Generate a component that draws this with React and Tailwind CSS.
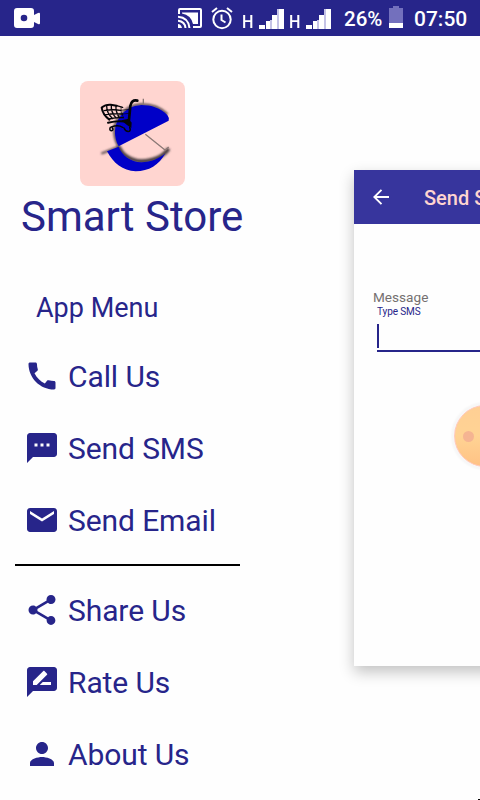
const PATHS = {
  call: 'M20.01 15.38c-1.23 0-2.42-.2-3.53-.56-.35-.12-.74-.03-1.01.24l-1.57 1.97c-2.83-1.35-5.48-3.9-6.89-6.83l1.95-1.66c.27-.28.35-.67.24-1.02-.37-1.11-.56-2.3-.56-3.53 0-.54-.45-.99-.99-.99H4.19C3.65 3 3 3.24 3 3.99 3 13.28 10.73 21 20.01 21c.71 0 .99-.63.99-1.18v-3.45c0-.54-.45-.99-.99-.99z',
  sms: 'M20 2H4c-1.1 0-1.99.9-1.99 2L2 22l4-4h14c1.1 0 2-.9 2-2V4c0-1.100-.9-2-2-2zM9 11H7V9h2v2zm4 0h-2V9h2v2zm4 0h-2V9h2v2z',
  email: 'M20 4H4c-1.100 0-1.990.9-1.990 2L2 18c0 1.100.9 2 2 2h16c1.100 0 2-.9 2-2V6c0-1.100-.9-2-2-2zm0 4l-8 5-8-5V6l8 5 8-5v2z',
  share: 'M18 16.080c-.76 0-1.440.3-1.960.77L8.910 12.700c.05-.23.09-.46.09-.7s-.04-.47-.09-.7l7.050-4.110c.54.5 1.250.81 2.040.81 1.660 0 3-1.340 3-3s-1.340-3-3-3-3 1.340-3 3c0 .24.04.47.09.7L8.040 9.810C7.500 9.310 6.790 9 6 9c-1.660 0-3 1.340-3 3s1.340 3 3 3c.79 0 1.500-.31 2.040-.81l7.120 4.160c-.05.21-.08.43-.08.65 0 1.610 1.310 2.920 2.920 2.920s2.920-1.310 2.920-2.920-1.310-2.920-2.920-2.920z',
  rate: 'M20 2H4c-1.100 0-1.990.9-1.990 2L2 22l4-4h14c1.100 0 2-.9 2-2V4c0-1.100-.9-2-2-2zM6 14v-2.470l6.880-6.880c.2-.2.51-.2.71 0l1.770 1.770c.2.2.2.51 0 .71L8.470 14H6zm12 0h-7.500l2-2H18v2z',
  person: 'M12 12c2.210 0 4-1.790 4-4s-1.790-4-4-4-4 1.790-4 4 1.790 4 4 4zm0 2c-2.670 0-8 1.340-8 4v2h16v-2c0-2.660-5.330-4-8-4z',
};

function MenuItem({ icon, label }) {
  return (
    <li className="flex h-[72px] items-center pl-6">
      <svg viewBox="0 0 24 24" className="size-9 shrink-0 fill-current">
        <path d={PATHS[icon]} />
      </svg>
      <span className="mt-0.5 ml-2 text-[30px] leading-9 tracking-[-0.1px] whitespace-nowrap">{label}</span>
    </li>
  );
}

function Signal() {
  return (
    <svg width="26" height="20" viewBox="0 0 26 20" className="shrink-0">
      <path fill="#fff" d="M0 16h6v4H0zM7 12h4v8H7zM13 6h5v14h-5zM20 0h5v20h-5z" />
      <path fill="#c5c3e6" d="M11 11h2v9h-2zM18 0h2v20h-2z" />
    </svg>
  );
}

function StatusBar() {
  return (
    <header className="flex h-9 items-start bg-[#27258a] text-white">
      <svg width="26" height="20" viewBox="0 0 26 20" className="mt-2 ml-3.5 shrink-0" fill="#fff">
        <path
          fillRule="evenodd"
          d="M3 0h14q3 0 3 3v4l4-2q2-1 2 1v9q0 2-2 1l-4-2v3q0 3-3 3H3q-3 0-3-3V3q0-3 3-3zM10 6.700a3.300 3.300 0 1 0 0 6.600 3.300 3.300 0 1 0 0-6.600z"
        />
      </svg>
      <svg width="24" height="20" viewBox="0 0 24 20" className="mt-2 ml-[138px] shrink-0" fill="none" stroke="#fff" strokeWidth="2">
        <path d="M1 6V2q0-1 1-1h20q1 0 1 1v16q0 1-1 1h-7" />
        <path fill="#fff" stroke="none" d="M4 4.500h16V16h-5Q13 7 4 5.500z" />
        <path d="M0 8.700Q10.500 9.500 11.500 20M0 12.700Q7 13.500 7.500 20" />
        <path fill="#fff" stroke="none" d="M0 16q3 0 4 4H0z" />
      </svg>
      <svg width="22" height="23" viewBox="0 0 22 23" className="mt-[7px] ml-[9px] shrink-0" fill="none" stroke="#fff" strokeWidth="2">
        <circle cx="11" cy="12.500" r="8.700" />
        <path d="M1 5l5-4M21 5l-5-4M10.500 7.500V13l4 2.500" />
      </svg>
      <span className="mt-[12px] ml-[9px] w-[17px] text-[19px] leading-5 font-medium tracking-tighter"><span className="inline-block origin-left scale-x-85">H</span></span>
      <div className="mt-[9px]"><Signal /></div>
      <span className="mt-[12px] ml-[4px] w-[17px] text-[19px] leading-5 font-medium"><span className="inline-block origin-left scale-x-85">H</span></span>
      <div className="mt-[9px]"><Signal /></div>
      <span className="mt-[7px] ml-[12px] w-[45px] text-[20.5px] leading-6 font-medium whitespace-nowrap">26%</span>
      <svg width="14" height="22" viewBox="0 0 14 22" className="mt-1.5 shrink-0">
        <path fill="#7370bd" d="M4 0h6v2h4v15H0V2h4z" />
        <path fill="#fff" d="M0 17h14v5H0z" />
      </svg>
      <span className="mt-[7px] ml-[11px] text-[21px] leading-6 font-medium whitespace-nowrap">07:50</span>
    </header>
  );
}

function Logo() {
  return (
    <svg viewBox="30 33 315 315" className="ml-20 block size-[105px] rounded-[8px] bg-[#ffd5d0]">
      <defs>
        <filter id="soft" x="-20%" y="-20%" width="140%" height="140%">
          <feGaussianBlur stdDeviation="3" />
        </filter>
      </defs>
      <g fill="none" stroke="#4b4043" filter="url(#soft)">
        <path strokeWidth="7" d="M145 228C128 196 130 160 150 138C168 114 190 104 214 103Q262 103 292 133" />
        <path strokeWidth="12" d="M146 229C155 253 180 273 214 274C248 273 280 260 296 236" />
        <path strokeWidth="6" d="M94 251L146 230" />
      </g>
      <path fill="#0000c8" d="M146 229L296 152Q298 142 292 135C272 114 245 105 214 105C186 107 166 118 150 140C130 165 131 202 146 229z" />
      <path fill="#0000c8" d="M111 244L146 230C156 256 182 276 214 277C242 276 268 266 286 250C268 285 236 304 197 304C158 302 130 280 111 244z" />
      <path fill="none" stroke="#8c7976" strokeWidth="4" d="M220 86v17M226 193l60 48M286 241l10-10" />
      <g fill="none" stroke="#050509" strokeLinecap="round" strokeLinejoin="round">
        <path strokeWidth="8" d="M202 92Q184 88 181 108L177 150" />
        <path strokeWidth="6" d="M96 112Q106 103 122 104L140 107M95 113Q98 134 118 149" />
        <path strokeWidth="4" d="M140 107L158 112M102 122Q128 117 152 121M107 134Q130 130 158 132M117 147Q140 142 160 143M110 108Q110 130 128 146M124 105Q122 126 138 144M138 107Q136 124 148 143" />
        <path strokeWidth="2" d="M152 121L178 118M158 132L178 130M153 111Q150 126 160 142" />
        <path strokeWidth="6" d="M114 158Q146 150 176 156" />
        <path strokeWidth="4.500" d="M121 172q-4 9 3 10q8-2 3-8M124 171Q144 163 158 172M162 174Q167 186 178 184Q183 180 179 172" />
      </g>
      <path fill="#050509" d="M154 151l22-5 9 12-1 16-14-10z" />
    </svg>
  );
}

function SmsPanel() {
  return (
    <section className="mt-[134px] h-[496px] w-[300px] shrink-0 bg-[#fefefe] shadow-[0_6px_14px_rgba(0,0,0,0.24)]">
      <div className="flex h-[54px] items-center bg-[#37359d] pl-[19px]">
        <svg width="16" height="16" viewBox="0 0 16 16" fill="none" stroke="#fff" strokeWidth="1.900">
          <path d="M8.500 .8L1.300 8l7.200 7.200M1.300 8H16" />
        </svg>
        <span className="mt-px ml-[35px] text-[20px] leading-6 font-medium whitespace-nowrap text-[#ffd5d0]">Send SMS</span>
      </div>
      <div className="pt-[65px] pl-[19px]">
        <p className="text-[13.6px] leading-4 text-[#757070]">Message</p>
        <p className="ml-[4px] text-[10px] leading-[13px] tracking-[-0.1px] text-[#27258a]">Type SMS</p>
        <div className="mt-[6px] ml-[4px] h-[28px] border-b-2 border-[#27258a]">
          <div className="h-6 w-0.5 bg-[#27258a]" />
        </div>
        <div className="mt-[53px] ml-[81px] flex size-[62px] items-center rounded-full border border-[#ffc9bd] bg-linear-to-b from-[#ffcf94] via-[#ffd394] to-[#ffc285] pl-[8px] shadow-[0_0_2px_3px_rgba(0,0,0,0.03)]">
          <div className="size-[11px] rounded-full bg-[#f5b492]" />
        </div>
      </div>
    </section>
  );
}

export default function App() {
  return (
    <div className="h-[800px] w-[480px] overflow-hidden bg-[#fefefe] font-[Roboto,sans-serif]">
      <StatusBar />
      <main className="flex h-[764px] overflow-hidden">
        <nav className="flex w-[354px] shrink-0 flex-col pt-[45px] text-[#27258a]">
          <Logo />
          <h1 className="mt-[5px] ml-[21px] text-[42px] leading-[52px] whitespace-nowrap">Smart Store</h1>
          <h2 className="mt-[49px] ml-9 text-[27px] leading-8 whitespace-nowrap">App Menu</h2>
          <ul className="mt-[16px]">
            <MenuItem icon="call" label="Call Us" />
            <MenuItem icon="sms" label="Send SMS" />
            <MenuItem icon="email" label="Send Email" />
          </ul>
          <hr className="mt-2 ml-[15px] h-0.5 w-[225px] border-0 bg-black" />
          <ul className="mt-2">
            <MenuItem icon="share" label="Share Us" />
            <MenuItem icon="rate" label="Rate Us" />
            <MenuItem icon="person" label="About Us" />
          </ul>
          <div className="mt-[9px] ml-[478px] h-px w-0.5 bg-black" />
        </nav>
        <SmsPanel />
      </main>
    </div>
  );
}
